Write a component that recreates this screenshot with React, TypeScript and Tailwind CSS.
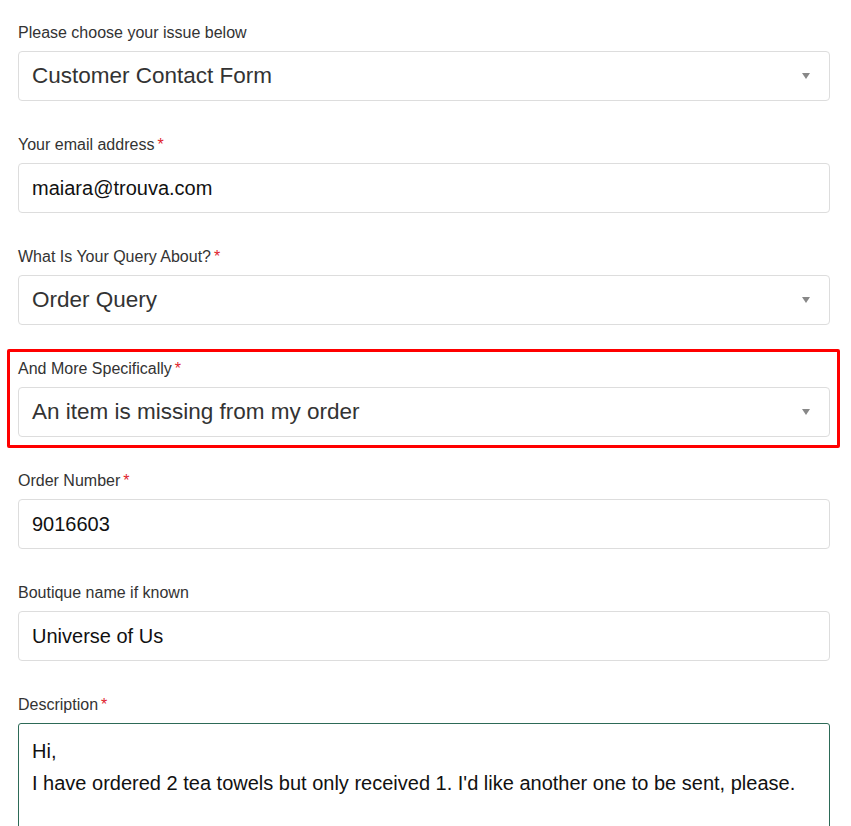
import React from 'react';

const Caret = () => (
    <svg width="8" height="6" viewBox="0 0 8 6" className="absolute right-[19px] top-1/2 -translate-y-1/2">
        <path d="M0 0 H8 L4 6 Z" fill="#888888" />
    </svg>
);

function Label({ text, required }: { text: string; required?: boolean }) {
    return (
        <div className="h-5 leading-5 text-[16px] text-[#333333] mb-[8px]">
            {text}
            {required && <span className="text-[#e0242c] ml-[3px]">*</span>}
        </div>
    );
}

function SelectBox({ value }: { value: string }) {
    return (
        <div className="relative h-[50px] border border-[#dddddd] rounded-[4px] bg-white flex items-center pl-[13px] text-[22.5px] text-[#333333]">
            {value}
            <Caret />
        </div>
    );
}

function TextBox({ value }: { value: string }) {
    return (
        <div className="h-[50px] border border-[#dddddd] rounded-[4px] bg-white flex items-center pl-[13px] text-[20px] text-[#111111]">
            {value}
        </div>
    );
}

export default function App() {
    return (
        <div className="relative w-[851px] h-[826px] overflow-hidden bg-white px-[18px] pt-[23px] [font-family:'Liberation_Sans',Arial,sans-serif]">
            <div className="w-[812px] flex flex-col gap-[34px]">
                <div>
                    <Label text="Please choose your issue below" />
                    <SelectBox value="Customer Contact Form" />
                </div>
                <div>
                    <Label text="Your email address" required />
                    <TextBox value="maiara@trouva.com" />
                </div>
                <div>
                    <Label text="What Is Your Query About?" required />
                    <SelectBox value="Order Query" />
                </div>
                <div>
                    <Label text="And More Specifically" required />
                    <SelectBox value="An item is missing from my order" />
                </div>
                <div>
                    <Label text="Order Number" required />
                    <TextBox value="9016603" />
                </div>
                <div>
                    <Label text="Boutique name if known" />
                    <TextBox value="Universe of Us" />
                </div>
                <div>
                    <Label text="Description" required />
                    <div className="h-[160px] border border-[#2d6a57] rounded-[3px] bg-white pl-[13px] pt-[11px] text-[20px] leading-[32px] text-[#111111]">
                        <div>Hi,</div>
                        <div>I have ordered 2 tea towels but only received 1. I'd like another one to be sent, please.</div>
                    </div>
                </div>
            </div>

            {/* red highlight annotation */}
            <div className="absolute left-[7px] top-[349px] w-[833px] h-[99px] border-[3px] border-[#ff0000] rounded-[2px] pointer-events-none" />
        </div>
    );
}
